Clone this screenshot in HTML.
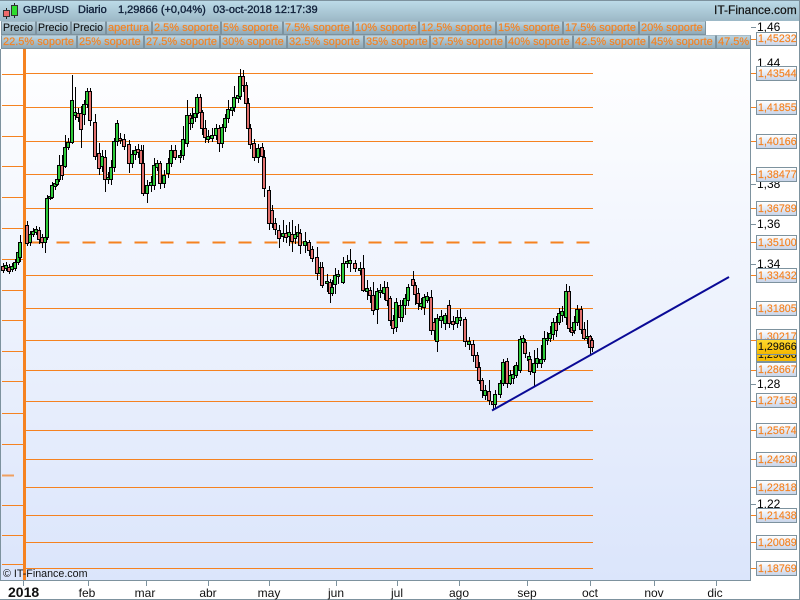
<!DOCTYPE html>
<html><head><meta charset="utf-8"><style>
html,body{margin:0;padding:0}
body{width:800px;height:600px;position:relative;overflow:hidden;background:#fff;font-family:"Liberation Sans",sans-serif;font-size:12px}
div{position:absolute;box-sizing:border-box;white-space:nowrap}
#hdr{left:0;top:0;width:800px;height:21px;background:linear-gradient(#bcdbe8,#9cb8c6);border-top:1px solid #7d929e}
.h{top:4px;font-size:11px;line-height:13px;color:#10203a;-webkit-text-stroke:.35px #10203a}
#plot{left:0;top:49px;width:751px;height:532px;background:linear-gradient(#fff,#dbe5fb);border-left:1px solid #7d929e;border-right:1px solid #7d929e;border-bottom:1px solid #7d929e}
.c{height:14px;line-height:13px;background:linear-gradient(#bcd4e0,#8ea8b6);border:1px solid #7d929e;border-top-color:#a6bcc8;padding-left:1px;color:#f58220;overflow:hidden;font-size:11px;-webkit-text-stroke:.15px #f58220}
.p{color:#111;font-size:10.6px;-webkit-text-stroke:.1px #111}
.a{left:756px;width:41px;height:15px;line-height:14px;background:linear-gradient(#fff,#c9d5ea);border:1px solid #7d929e;color:#f58220;padding-left:1px;font-size:10.6px;letter-spacing:.05px;-webkit-text-stroke:.15px #f58220}
.y{background:linear-gradient(#ffd92e,#f5b800);color:#111;-webkit-text-stroke:.1px #111}
.t{left:757px;color:#000;font-size:12px;line-height:14px}
.x{top:586px;color:#111;font-size:12px;line-height:14px;transform:translateX(-50%)}
</style></head><body>
<div id="hdr"></div>
<svg style="position:absolute;left:0;top:0" width="20" height="20"><path d="M6.500 8V19M14.500 3V18" stroke="#222" fill="none"/><rect x="3.500" y="10.500" width="6" height="6" fill="#ee6a6a" stroke="#333"/><rect x="11.500" y="5.500" width="6" height="10" fill="#2fdc2f" stroke="#333"/></svg>
<div class="h" style="left:23px;font-size:10.2px">GBP/USD</div>
<div class="h" style="left:78px">Diario</div>
<div class="h" style="left:118px">1,29866 (+0,04%)</div>
<div class="h" style="left:213px">03-oct-2018 12:17:39</div>
<div class="h" style="left:714px;font-size:12px;color:#111;-webkit-text-stroke:.2px #111">IT-Finance.com</div>

<div class="c p" style="left:1px;top:21px;width:35px">Precio</div>
<div class="c p" style="left:36px;top:21px;width:35px">Precio</div>
<div class="c p" style="left:71px;top:21px;width:35px">Precio</div>
<div class="c" style="left:106px;top:21px;width:46px">apertura</div>
<div class="c" style="left:152px;top:21px;width:69px">2.5% soporte</div>
<div class="c" style="left:221px;top:21px;width:62px">5% soporte</div>
<div class="c" style="left:283px;top:21px;width:70px">7.5% soporte</div>
<div class="c" style="left:353px;top:21px;width:66px">10% soporte</div>
<div class="c" style="left:419px;top:21px;width:77px">12.5% soporte</div>
<div class="c" style="left:496px;top:21px;width:67px">15% soporte</div>
<div class="c" style="left:563px;top:21px;width:76px">17.5% soporte</div>
<div class="c" style="left:639px;top:21px;width:67px">20% soporte</div>

<div class="c" style="left:1px;top:35px;width:76px">22.5% soporte</div>
<div class="c" style="left:77px;top:35px;width:67px">25% soporte</div>
<div class="c" style="left:144px;top:35px;width:76px">27.5% soporte</div>
<div class="c" style="left:220px;top:35px;width:67px">30% soporte</div>
<div class="c" style="left:287px;top:35px;width:77px">32.5% soporte</div>
<div class="c" style="left:364px;top:35px;width:66px">35% soporte</div>
<div class="c" style="left:430px;top:35px;width:76px">37.5% soporte</div>
<div class="c" style="left:506px;top:35px;width:67px">40% soporte</div>
<div class="c" style="left:573px;top:35px;width:76px">42.5% soporte</div>
<div class="c" style="left:649px;top:35px;width:67px">45% soporte</div>
<div class="c" style="left:716px;top:35px;width:35px">47.5% soporte</div>

<div id="plot"></div>
<svg id="s" style="position:absolute;left:0;top:0" width="800" height="600">
<g stroke="#f58220" fill="none" shape-rendering="crispEdges">
<path d="M2 74.500H23M2 105.500H23M2 136.500H23M2 166.500H23M2 197.500H23M2 228.500H23M2 259.500H23M2 290.500H23M2 320.500H23M2 351.500H23M2 381.500H23M2 413.500H23M2 444.500H23M2 505.500H23M2 535.500H23M2 564.500H23"/>
<path d="M26 73.500H593M26 107.500H593M26 141.500H593M26 174.500H593M26 208.500H593M26 275.500H593M26 308.500H593M26 340.500H593M26 370.500H593M26 401.500H593M26 430.500H593M26 459.500H593M26 487.500H593M26 515.500H593M26 542.500H593M26 568.500H593"/>
<rect x="23" y="49" width="3" height="531" fill="#f58220" stroke="none"/>
<path d="M2 475.500H14" stroke-width="2" stroke="#f0a060"/>
<path d="M30.700 242.500H590" stroke-width="2" stroke-dasharray="13 13"/>
<path d="M751 39.500H756M751 73.500H756M751 107.500H756M751 141.500H756M751 174.500H756M751 208.500H756M751 242.500H756M751 275.500H756M751 308.500H756M751 340.500H756M751 370.500H756M751 401.500H756M751 430.500H756M751 459.500H756M751 487.500H756M751 515.500H756M751 542.500H756M751 568.500H756"/>
</g>
<g id="cd"></g>
<path d="M492 410.500L729 277" stroke="#0a0a96" stroke-width="2" fill="none"/>
<g stroke="#7d929e" fill="none" shape-rendering="crispEdges">
<path d="M751 27.500H756M751 184.500H756M751 224.500H756M751 264.500H756M751 384.500H756M751 504.500H756"/>
<path d="M23.500 581V586M88.500 581V586M146.500 581V586M208.500 581V586M269.500 581V586M336.500 581V586M397.500 581V586M459.500 581V586M527.500 581V586M590.500 581V586M654.500 581V586M716.500 581V586"/>
<path d="M0 599.500H800M799.500 0V600"/>
</g>
</svg>

<div style="left:3px;top:567px;font-size:10.7px;line-height:14px;color:#111">© IT-Finance.com</div>

<div class="t" style="top:20px">1,46</div>
<div class="t" style="top:56px">1,44</div>
<div class="t" style="top:177px">1,38</div>
<div class="t" style="top:217px">1,36</div>
<div class="t" style="top:257px">1,34</div>
<div class="t" style="top:377px">1,28</div>
<div class="t" style="top:497px">1,22</div>

<div class="a" style="top:32px;height:14px;line-height:13px">1,45232</div>
<div class="a" style="top:66px">1,43544</div>
<div class="a" style="top:100px">1,41855</div>
<div class="a" style="top:134px">1,40166</div>
<div class="a" style="top:167px">1,38477</div>
<div class="a" style="top:201px">1,36789</div>
<div class="a" style="top:235px">1,35100</div>
<div class="a" style="top:268px">1,33432</div>
<div class="a" style="top:301px">1,31805</div>
<div class="a" style="top:329px">1,30217</div>
<div class="a y" style="top:347px">1,29866</div>
<div class="a y" style="top:339px;height:16px">1,29866</div>
<div class="a" style="top:362px">1,28667</div>
<div class="a" style="top:393px">1,27153</div>
<div class="a" style="top:423px">1,25674</div>
<div class="a" style="top:452px">1,24230</div>
<div class="a" style="top:480px">1,22818</div>
<div class="a" style="top:508px">1,21438</div>
<div class="a" style="top:535px">1,20089</div>
<div class="a" style="top:561px">1,18769</div>

<div style="left:8px;top:584px;font-size:14px;font-weight:bold;line-height:16px;color:#111">2018</div>
<div class="x" style="left:87px">feb</div>
<div class="x" style="left:145px">mar</div>
<div class="x" style="left:208px">abr</div>
<div class="x" style="left:269px">may</div>
<div class="x" style="left:336px">jun</div>
<div class="x" style="left:397px">jul</div>
<div class="x" style="left:459px">ago</div>
<div class="x" style="left:527px">sep</div>
<div class="x" style="left:590px">oct</div>
<div class="x" style="left:654px">nov</div>
<div class="x" style="left:715px">dic</div>

<script>
var D="3 266 270 r;6 265 268 g;9 267 271 r;12 266 269 g;15 262 268 g;18 252 262 g;20 242 257 g 235 262;27 225 243 r 221 246;30 234 242 g 231 246;33 231 234 g;36 229 232 g;39 230 239 r 227 244;42 237 242 r 234 248;45 237 242 g 232 253;47 198 237 g;50 196 198 g 192 200;52 185 197 g 182 199;55 183 186 g 180 190;57 179 184 g 170 186;59 165 179 g 155 182;62 165 175 r 155 180;65 147 166 g 135 168;68 142 147 g 138 150;72 100 142 g 75 144;75 112 115 g 87 120;78 113 117 r 108 122;81 113 129 r 106 148;84 104 114 g 100 125;87 91 104 g 88 108;90 91 120 r 88 126;95 122 156 r 114 160;99 153 168 r 143 175;102 156 166 g 150 172;105 157 179 r 150 192;108 177 179 g 172 184;111 167 179 g 160 185;114 141 167 g 138 172;117 123 141 g 120 146;120 138 140 r 133 144;124 139 146 r 134 150;129 144 163 r 140 173;132 154 163 g 150 168;135 150 154 g 146 160;138 149 152 r 144 158;141 150 163 r 145 170;143 163 193 r 145 196;147 185 193 g 180 203;151 182 185 g 176 192;154 165 185 g 158 190;157 163 167 g 160 171;160 163 183 r 161 189;164 175 183 g 170 188;168 163 173 g 158 178;171 150 163 g 145 167;175 150 157 r 145 160;180 155 157 g 150 163;183 139 155 g 126 160;187 115 143 g 100 147;190 115 123 r 113 130;192 118 123 g 108 128;195 113 117 g 108 122;197 97 113 g 94 118;200 97 112 r 94 118;202 112 128 r 110 135;205 128 137 r 120 143;208 136 139 g 130 143;212 135 138 g 128 142;216 128 135 g 124 140;219 128 143 r 125 152;222 127 143 g 124 148;225 118 127 g 114 132;228 109 118 g 100 123;232 107 110 g 100 116;234 97 107 g 86 112;238 95 98 g 85 103;240 76 96 g 69 100;243 76 85 r 70 92;246 85 103 r 82 110;248 103 128 r 98 133;250 128 144 r 124 149;254 143 157 r 139 161;258 148 157 g 144 163;262 147 156 r 143 161;264 157 188 r 150 197;269 190 223 r 186 230;272 210 223 r 205 228;275 223 229 r 218 235;279 230 238 r 225 248;283 233 236 g 220 242;286 233 237 r 225 243;289 232 236 g 222 246;292 234 241 r 220 252;295 234 238 g 226 244;298 232 236 g 224 240;300 233 245 r 229 254;305 241 245 g 232 253;309 242 250 r 240 256;312 249 258 r 246 262;317 257 273 r 247 280;320 267 273 g 262 284;322 267 285 r 262 288;327 281 283 g 274 292;330 282 293 r 279 303;332 287 293 g 280 296;335 275 284 g 268 294;338 274 276 g 270 284;343 263 282 g 257 284;347 261 263 g 255 268;350 260 263 g 249 272;355 263 268 r 260 272;360 268 270 g 262 275;363 268 290 r 255 292;367 288 291 g 280 300;370 290 295 r 287 303;373 295 310 r 282 315;377 291 309 g 288 324;380 290 292 g 284 298;384 287 293 g 281 300;387 287 300 r 282 306;390 298 320 r 296 326;393 320 328 r 315 334;396 302 327 g 298 332;400 305 317 r 300 322;402 305 317 g 300 322;405 298 305 g 294 315;408 287 300 g 284 306;413 279 285 r 271 292;415 285 294 r 282 305;418 293 303 r 288 310;421 303 306 g 298 310;424 297 307 g 294 315;427 296 300 g 292 303;431 297 330 r 290 335;434 322 330 r 318 340;437 318 341 g 314 352;441 316 320 g 310 328;445 315 323 g 313 330;449 305 323 r 300 328;453 321 324 r 316 330;457 317 323 g 310 328;460 317 320 g 309 326;465 319 341 r 317 347;469 341 344 g 337 350;473 344 355 r 340 362;477 355 367 r 352 372;479 367 380 r 362 384;482 380 390 r 378 398;485 390 395 g 385 400;489 391 400 r 380 405;493 401 404 r 395 410;495 394 404 g 390 409;500 383 394 g 380 398;503 362 383 g 359 386;507 361 383 r 358 388;510 375 383 g 370 385;513 374 378 g 366 384;516 365 375 g 362 378;520 339 370 g 336 373;523 338 342 g 335 350;525 342 353 r 339 358;529 356 360 g 352 366;530 359 371 r 356 375;534 363 372 g 350 386;537 358 363 g 348 368;541 359 363 g 345 368;544 338 359 g 331 362;547 338 340 g 332 345;550 333 338 g 326 342;553 322 334 g 318 340;556 322 330 r 316 337;559 313 322 g 308 325;562 311 315 g 306 322;566 291 317 g 284 325;569 291 328 r 286 332;572 327 332 r 322 336;574 322 330 g 316 334;577 309 322 g 305 326;581 309 329 r 306 334;584 329 338 r 322 340;587 336 338 g 320 344;590 336 347 r 335 355;592 340 347 r 338 352".split(";");
var w="",b="";
D.forEach(function(l){var p=l.split(" ").map(function(v,i){return i==3?v:+v});var x=p[0],t=p[1],e=p[2];
var wt=p[4]||t-3,wb=p[5]||e+3;
w+="M"+(x+.5)+" "+wt+"V"+wb;
b+='<rect x="'+(x-1.5)+'" y="'+(t+.5)+'" width="3" height="'+Math.max(e-t,1)+'" fill="'+(p[3]=="g"?"#2ecb3a":"#e2706e")+'" stroke="#000"/>';});
document.getElementById("cd").innerHTML='<path d="'+w+'" stroke="#000" fill="none" shape-rendering="crispEdges"/><g shape-rendering="crispEdges">'+b+'</g>';
</script>
</body></html>
